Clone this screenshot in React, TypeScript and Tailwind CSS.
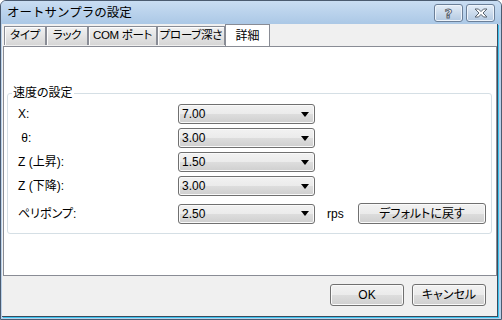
import React from 'react';

function Combo({ value }: { value: string }) {
  return (
    <div className="flex h-[20px] w-[137px] items-center justify-between rounded-[3px] border border-[#707070] bg-[linear-gradient(#f2f2f2_0%,#ebebeb_50%,#dddddd_51%,#cfcfcf_100%)] pl-[3px] pr-[5px] shadow-[inset_0_0_0_1px_#fafafa]">
      <span className="font-['Liberation_Sans_Narrow','Liberation_Sans',sans-serif] text-[12px] leading-none">{value}</span>
      <svg width="8" height="5" viewBox="0 0 8 5">
        <path d="M0 0h8L4 5z" fill="#000" />
      </svg>
    </div>
  );
}

function Button({ label, className }: { label: string; className: string }) {
  return (
    <div
      className={`flex items-center justify-center rounded-[3px] border border-[#707070] bg-[linear-gradient(#f2f2f2_0%,#ebebeb_50%,#dddddd_51%,#cfcfcf_100%)] text-[12px] shadow-[inset_0_0_0_1px_#fafafa] ${className}`}
    >
      {label}
    </div>
  );
}

const rows = [
  { label: 'X:', value: '7.00' },
  { label: '\u00a0θ:', value: '3.00' },
  { label: 'Z (上昇):', value: '1.50' },
  { label: 'Z (下降):', value: '3.00' },
];

const tabs = [
  { label: 'タイプ', w: 'w-[42px]' },
  { label: 'ラック', w: 'w-[42px]' },
  { label: 'COM ポート', w: 'w-[69px]' },
  { label: 'プローブ深さ', w: 'w-[68px]' },
];

export default function App() {
  return (
    <div className="flex h-[320px] w-[502px] flex-col rounded-t-[6px] border border-[#4b5b70] bg-[#b9d1ea] font-['Liberation_Sans','Noto_Sans_CJK_JP',sans-serif] text-black [font-feature-settings:'palt']">
      {/* Title bar */}
      <div className="flex h-[23px] shrink-0 items-start rounded-t-[5px] bg-gradient-to-b from-[#c9ddf2] to-[#abc8e6]">
        <div className="pl-[6px] pt-[4px] text-[12.5px] leading-[16px] [font-feature-settings:normal]">オートサンプラの設定</div>
        <div className="ml-auto mr-[6px] mt-[3px] flex gap-[3px]">
          <div className="flex h-[18px] w-[29px] items-center justify-center rounded-[3px] border border-[#6b7f98] bg-gradient-to-b from-[#e4edf7] to-[#b3c9e1] shadow-[inset_0_0_0_1px_#eef4fb]">
            <span className="font-['DejaVu_Sans',sans-serif] text-[13px] font-bold leading-none text-white [-webkit-text-stroke:1px_#5a6470]">?</span>
          </div>
          <div className="flex h-[18px] w-[29px] items-center justify-center rounded-[3px] border border-[#6b7f98] bg-gradient-to-b from-[#e4edf7] to-[#b3c9e1] shadow-[inset_0_0_0_1px_#eef4fb]">
            <svg width="14" height="10" viewBox="0 0 14 10">
              <path d="M1 1h3.5L7 3.6 9.5 1H13L9 5l4 4H9.5L7 6.4 4.5 9H1l4-4z" fill="#fff" stroke="#5a6470" strokeWidth="1" strokeLinejoin="round" />
            </svg>
          </div>
        </div>
      </div>

      {/* Client area */}
      <div className="mb-[2px] ml-[1px] mr-[3px] flex flex-1 flex-col border-b border-r border-[#3a4a5e] bg-[#f0f0f0] pl-[1px] shadow-[1px_1px_0_#3cc3ee]">
        {/* Tabs */}
        <div className="relative z-10 flex h-[22px] items-start pl-[1px]">
          {tabs.map((t) => (
            <div
              key={t.label}
              className={`mt-[2px] flex h-[19px] items-center justify-center whitespace-nowrap border border-b-0 border-[#898c95] bg-gradient-to-b from-[#f2f2f2] to-[#d6d6d6] text-[11.5px] leading-none tracking-[-0.3px] shadow-[inset_1px_1px_0_#fcfcfc] ${t.w}`}
            >
              {t.label}
            </div>
          ))}
          <div className="flex h-[22px] w-[45px] items-center justify-center border border-b-0 border-[#898c95] bg-white pt-[1px] text-[12px] leading-none">
            詳細
          </div>
        </div>

        {/* Panel */}
        <div className="flex h-[230px] shrink-0 flex-col border border-[#898c95] bg-white">
          <fieldset className="ml-[3px] mr-[4px] mt-[38px] rounded-[3px] border border-[#d5dfe5] pb-[9px] pl-[4px] pt-[3px]">
            <legend className="px-[1px] text-[12px] leading-[16px]">速度の設定</legend>
            <div className="flex flex-col gap-[4px] pl-[6px]">
              {rows.map((r) => (
                <div key={r.label} className="flex items-center">
                  <div className="w-[160px] text-[12px]">{r.label}</div>
                  <Combo value={r.value} />
                </div>
              ))}
              <div className="mt-[3px] flex items-center">
                <div className="w-[160px] text-[12px]">ペリポンプ:</div>
                <Combo value="2.50" />
                <div className="ml-[12px] w-[31px] text-[12px]">rps</div>
                <Button label="デフォルトに戻す" className="h-[21px] w-[128px]" />
              </div>
            </div>
          </fieldset>
        </div>

        {/* Dialog buttons */}
        <div className="mt-[8px] flex justify-end gap-[8px] pr-[11px]">
          <Button label="OK" className="h-[22px] w-[74px]" />
          <Button label="キャンセル" className="h-[22px] w-[74px]" />
        </div>
      </div>
    </div>
  );
}
